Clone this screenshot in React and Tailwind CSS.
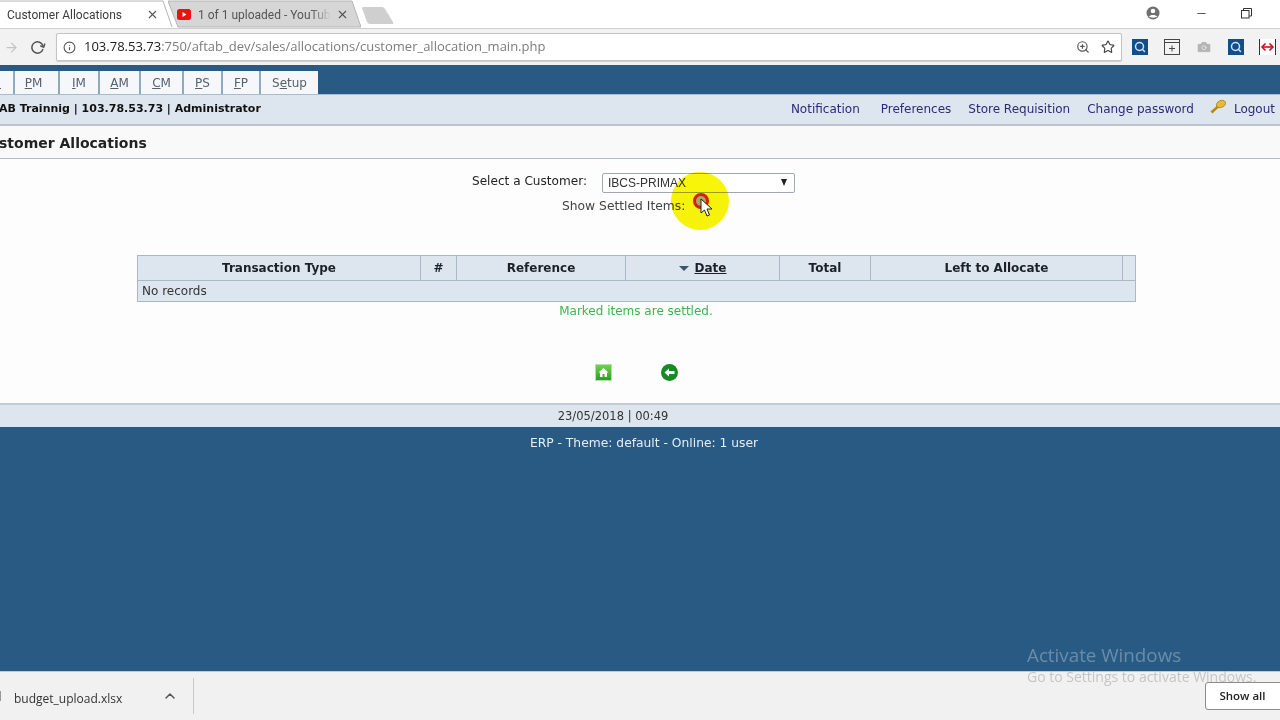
import React from "react";
import { Search, Minus, Star, ZoomIn, RotateCw, ArrowRight, X, ChevronUp, Info, Camera } from "lucide-react";

const verdana = "font-['DejaVu_Sans',sans-serif]";
const chrome = "font-['Open_Sans',sans-serif]";
const tabFont = "font-['Roboto',sans-serif]";

function NavTab({ label, u, w, extra }) {
  const i = label.indexOf(u);
  return (
    <div className={`flex items-center justify-center h-[23px] mt-[6px] pt-[1px] bg-[#f5f7fa] border-l-2 border-[#8fa9bd] text-[12px] text-[#55616c] ${w} ${extra || ""}`}>
      <span>
        {label.slice(0, i)}
        <span className="underline">{u}</span>
        {label.slice(i + 1)}
      </span>
    </div>
  );
}

function ExtBlue({ className }) {
  return (
    <div className={`w-[16px] h-[16px] bg-[#114f8c] flex items-center justify-center ${className || ""}`}>
      <Search size={12} strokeWidth={3} className="text-[#cfe3f5]" />
    </div>
  );
}

function Th({ w, children, className }) {
  return (
    <div className={`${w} shrink-0 flex items-center justify-center border-r border-[#aab7c4] text-[12px] font-bold text-[#1c2128] ${className || ""}`}>
      {children}
    </div>
  );
}

export default function App() {
  return (
    <div className="w-[1280px] h-[720px] overflow-hidden flex flex-col bg-white relative">
      {/* tab strip */}
      <div className={`h-[28px] shrink-0 flex items-start bg-white ${tabFont} text-[12px]`}>
        <div className="relative w-[173px] h-[28px] shrink-0 z-10">
          <svg className="absolute inset-0" width="173" height="28">
            <path d="M0 1 H163 L172 27" fill="#ffffff" stroke="#b4b4b4" />
          </svg>
          <span className="absolute left-[7px] top-[6px] text-[#3c3c3c]">Customer Allocations</span>
          <X size={13} strokeWidth={2} className="absolute left-[146px] top-[8px] text-[#555]" />
        </div>
        <div className="relative w-[193px] h-[28px] shrink-0 -ml-[5px]">
          <svg className="absolute inset-0" width="193" height="28">
            <path d="M0 1 H184 L193 27 H10 Z" fill="#d6d6d6" stroke="#b4b4b4" />
          </svg>
          <svg className="absolute left-[9px] top-[9px]" width="14" height="11" viewBox="0 0 14 11">
            <rect width="14" height="11" rx="2.5" fill="#ee0f0f" />
            <path d="M5.5 3 L9.5 5.5 L5.5 8 Z" fill="#fff" />
          </svg>
          <span className="absolute left-[30px] top-[6px] whitespace-nowrap text-[#555] [mask-image:linear-gradient(to_right,black_85%,transparent_100%)]">1 of 1 uploaded - YouTub</span>
          <X size={13} strokeWidth={2} className="absolute left-[168px] top-[8px] text-[#555]" />
        </div>
        <svg className="shrink-0 mt-[6px] -ml-[2px]" width="36" height="19">
          <path d="M3 2 Q3 1 5 1 H23 Q25 1 26 3 L34 16 Q35 18 33 18 H11 Q9 18 8 16 Z" fill="#cfcfcf" />
        </svg>
        <div className="flex-1" />
        <div className="relative w-[134px] h-[28px] shrink-0 text-[#555]">
          <svg className="absolute left-[0px] top-[6px]" width="14" height="14" viewBox="0 0 14 14">
            <circle cx="7" cy="7" r="6.5" fill="#6e6e6e" />
            <circle cx="7" cy="5" r="2.3" fill="#fff" />
            <path d="M2.8 10.5 C4 8.4 10 8.4 11.2 10.5 C10 12 4 12 2.8 10.5 Z" fill="#fff" />
          </svg>
          <Minus size={13} strokeWidth={1.5} className="absolute left-[49px] top-[7px] text-[#333]" />
          <svg className="absolute left-[95px] top-[8px]" width="11" height="11" viewBox="0 0 11 11" fill="none" stroke="#333">
            <rect x="0.5" y="2.5" width="7.5" height="7.5" />
            <path d="M2.5 2.5 V0.5 H10.5 V8 H8" />
          </svg>
        </div>
      </div>

      {/* toolbar */}
      <div className="h-[37px] shrink-0 flex items-center bg-[#f2f2f2] border-t border-[#cfcfcf]">
        <ArrowRight size={15} className="ml-[4px] text-[#c4c4c4]" />
        <RotateCw size={15} strokeWidth={2.4} className="ml-[11px] text-[#555] rotate-[20deg]" />
        <div className={`ml-[11px] w-[1066px] h-[28px] bg-white border border-[#c4c4c4] rounded-[2px] shadow-[0_1px_1px_rgba(0,0,0,0.15)] flex items-center ${chrome}`}>
          <Info size={13} className="ml-[6px] text-[#555]" />
          <span className="ml-[8px] text-[13px] whitespace-nowrap text-[#202020]">
            103.78.53.73<span className="text-[#7c7c7c]">:750/aftab_dev/sales/allocations/customer_allocation_main.php</span>
          </span>
          <div className="flex-1" />
          <ZoomIn size={14} className="text-[#555]" />
          <Star size={14} strokeWidth={2} className="ml-[11px] mr-[6px] text-[#444]" />
        </div>
        <ExtBlue className="ml-[10px]" />
        <svg className="ml-[16px]" width="16" height="16" viewBox="0 0 16 16" fill="none" stroke="#444">
          <rect x="0.5" y="0.5" width="15" height="15" />
          <path d="M0.5 3.5 H15.5 M8 6.5 V12.5 M5 9.5 H11" />
        </svg>
        <Camera size={16} fill="#b5b5b5" strokeWidth={1} className="ml-[16px] text-[#f2f2f2]" />
        <ExtBlue className="ml-[16px]" />
        <svg className="ml-[15px]" width="17" height="16" viewBox="0 0 17 16">
          <rect x="1" width="15" height="16" fill="#fff" />
          <path d="M0.5 0 V16 M16.5 0 V16" stroke="#333" />
          <path d="M3 8 H14" stroke="#d0101c" strokeWidth="1.6" />
          <path d="M6.5 4.5 L3 8 L6.5 11.5 M10.5 4.5 L14 8 L10.5 11.5" fill="none" stroke="#d0101c" strokeWidth="1.6" />
        </svg>
      </div>

      {/* blue nav */}
      <div className={`h-[29px] shrink-0 flex bg-[#285a84] ${verdana}`}>
        <div className="w-[13px] h-[23px] mt-[6px] bg-[#f5f7fa] overflow-hidden flex items-end pb-[5px]">
          <div className="w-[1px] h-[1px] bg-[#55616c]" />
        </div>
        <NavTab label="PM" u="P" w="w-[45px]" extra="pr-[6px]" />
        <NavTab label="IM" u="I" w="w-[40px]" />
        <NavTab label="AM" u="A" w="w-[41px]" />
        <NavTab label="CM" u="C" w="w-[43px]" />
        <NavTab label="PS" u="P" w="w-[39px]" />
        <NavTab label="FP" u="F" w="w-[38px]" />
        <NavTab label="Setup" u="e" w="w-[59px]" />
      </div>

      {/* info bar */}
      <div className={`h-[32px] shrink-0 flex items-center bg-[#dde5ee] border-t border-[#a9bccd] border-b-2 border-b-[#bcc4cc] ${verdana} overflow-hidden`}>
        <span className="-ml-[1px] text-[11px] font-bold text-[#111] whitespace-nowrap">AB Trainnig | 103.78.53.73 | Administrator</span>
        <div className="flex-1" />
        <div className="flex items-center -mt-[2px] text-[12px] text-[#2b2b7c] whitespace-nowrap">
          <span>Notification</span>
          <span className="ml-[21px]">Preferences</span>
          <span className="ml-[17px]">Store Requisition</span>
          <span className="ml-[17px]">Change password</span>
          <svg className="ml-[16px] -mt-[4px]" width="17" height="15" viewBox="0 0 17 15">
            <path d="M2 13 L8 7.5" stroke="#b8860b" strokeWidth="2.4" />
            <path d="M1 12 L3 14" stroke="#b8860b" strokeWidth="1.5" />
            <ellipse cx="11" cy="5" rx="4.8" ry="3.4" transform="rotate(-25 11 5)" fill="#e6b93a" stroke="#a87c10" strokeWidth="0.7" />
          </svg>
          <span className="ml-[7px] mr-[5px]">Logout</span>
        </div>
      </div>

      {/* title */}
      <div className={`h-[33px] shrink-0 flex items-center pt-[2px] bg-[#f9f9f9] border-b border-[#aebdc9] ${verdana} overflow-hidden`}>
        <span className="-ml-[1px] text-[14px] font-bold text-[#222] whitespace-nowrap">stomer Allocations</span>
      </div>

      {/* content */}
      <div className={`h-[244px] shrink-0 flex flex-col bg-[#fdfdfd] ${verdana}`}>
        <div className="h-[27px] mt-[10px] shrink-0 flex items-center">
          <span className="ml-[472px] -mt-[2px] text-[12.1px] text-[#222] whitespace-nowrap">Select a Customer:</span>
          <div className="relative ml-[15px] w-[193px] h-[20px] border border-[#9fa8b2] rounded-[2px] bg-white flex items-center">
            <span className={`ml-[5px] text-[12px] text-[#333] font-['Liberation_Sans',sans-serif]`}>IBCS-PRIMAX</span>
            <span className="absolute right-[7px] top-[5px] w-0 h-0 border-x-[3.5px] border-x-transparent border-t-[7px] border-t-[#222]" />
          </div>
        </div>
        <div className="relative h-[20px] shrink-0 flex items-center">
          <span className="ml-[562px] text-[12.3px] text-[#444] whitespace-nowrap">Show Settled Items:</span>
          <div className="absolute left-[671px] -top-[24px] w-[58px] h-[58px] rounded-full bg-[#f8f40a] mix-blend-multiply" />
          <div className="absolute left-[693px] top-[-3px] w-[16px] h-[16px] rounded-full border-[3px] border-[#d81c1c] bg-[#a8a860]" />
          <svg className="absolute left-[700px] top-[2px]" width="13" height="19" viewBox="0 0 13 19">
            <path d="M1 1 V15 L4.5 12 L7 18 L9.5 17 L7 11 L12 11 Z" fill="#fff" stroke="#222" strokeWidth="1" />
          </svg>
        </div>

        {/* table */}
        <div className="ml-[137px] mt-[39px] w-[999px] h-[47px] shrink-0 flex flex-col bg-[#dde5ee] border border-[#aab7c4]">
          <div className="h-[25px] shrink-0 flex border-b border-[#aab7c4]">
            <Th w="w-[283px]">Transaction Type</Th>
            <Th w="w-[36px]">#</Th>
            <Th w="w-[169px]">Reference</Th>
            <Th w="w-[154px]">
              <span className="w-0 h-0 mr-[6px] border-x-[5px] border-x-transparent border-t-[5px] border-t-[#3d5470]" />
              <span className="underline">Date</span>
            </Th>
            <Th w="w-[91px]">Total</Th>
            <Th w="w-[252px]">Left to Allocate</Th>
          </div>
          <div className="flex-1 flex items-center pl-[4px] text-[12px] text-[#333]">No records</div>
        </div>

        <div className="h-[18px] shrink-0 text-center text-[12px] leading-[18px] text-[#3cb54a] -translate-x-[4px]">Marked items are settled.</div>

        <div className="mt-[44px] flex items-center">
          <div className="ml-[595px] w-[17px] h-[17px] bg-linear-to-b from-[#6fd24a] to-[#1fa31f] border border-[#b5e0b0] flex items-center justify-center">
            <svg width="11" height="11" viewBox="0 0 11 11">
              <path d="M5.5 1 L10.5 5.5 H9 V10 H6.5 V7 H4.5 V10 H2 V5.5 H0.5 Z" fill="#fff" />
            </svg>
          </div>
          <svg className="ml-[49px]" width="17" height="17" viewBox="0 0 17 17">
            <circle cx="8.5" cy="8.5" r="8.5" fill="#178a24" />
            <path d="M3.5 8.5 L8 4.5 V7 H13.5 V10 H8 V12.5 Z" fill="#fff" />
          </svg>
        </div>
      </div>

      {/* date bar */}
      <div className={`h-[24px] shrink-0 flex items-center justify-center pr-[54px] pt-[1px] bg-[#dde5ee] border-t-2 border-[#c3cbd3] text-[11.5px] text-[#333] ${verdana}`}>
        23/05/2018 | 00:49
      </div>

      {/* footer blue */}
      <div className={`relative h-[244px] shrink-0 bg-[#285a84] text-center pt-[7px] text-[12.3px] text-[#e6edf3] ${verdana}`}>
        <span className="relative left-[4px]">ERP - Theme: default - Online: 1 user</span>
      </div>

      {/* download bar */}
      <div className={`h-[49px] shrink-0 flex items-center bg-[#f1f1f1] border-t border-[#c8c8c8] ${chrome}`}>
        <div className="w-[1px] h-[10px] bg-[#999]" />
        <span className="ml-[13px] mt-[5px] text-[12px] text-[#333]">budget_upload.xlsx</span>
        <ChevronUp size={16} strokeWidth={2.2} className="ml-[40px] text-[#555]" />
        <div className="ml-[15px] w-[1px] h-[36px] bg-[#c8c8c8]" />
        <div className="flex-1" />
        <div className="w-[80px] h-[28px] -mt-[1px] -mr-[5px] pr-[5px] bg-white border border-[#8c8c8c] rounded-[3px] flex items-center justify-center text-[11.5px] font-semibold text-[#222]">
          Show all
        </div>
      </div>

      {/* watermark overlay */}
      <div className={`absolute left-[1027px] top-[643px] pointer-events-none whitespace-nowrap ${chrome} text-white/30`}>
        <div className="text-[18.8px] leading-[24px]">Activate Windows</div>
        <div className="text-[14px] leading-[20px] text-[#a8a8a8]/60">Go to Settings to activate Windows.</div>
      </div>
    </div>
  );
}
